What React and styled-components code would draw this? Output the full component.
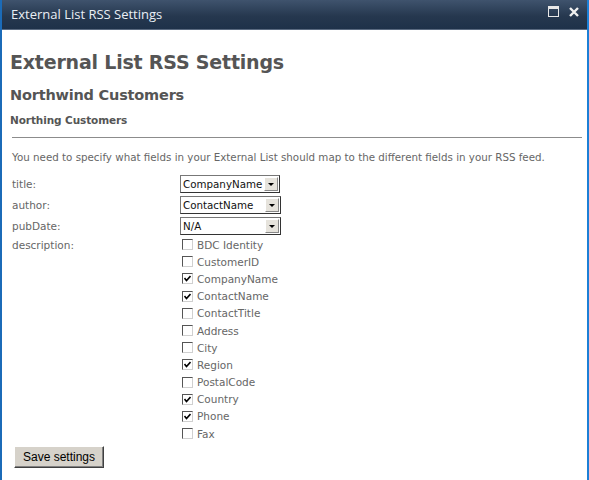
import React from "react";
import styled, { createGlobalStyle } from "styled-components";

const Global = createGlobalStyle`
  html, body { margin: 0; padding: 0; background: #fff; }
  body { font-family: Verdana, "DejaVu Sans", sans-serif; }
`;

const Frame = styled.div`
  width: 589px;
  height: 480px;
  box-sizing: border-box;
  border-left: 2px solid #1b6bb8;
  border-right: 2px solid #1c80d6;
  display: flex;
  flex-direction: column;
  overflow: hidden;
`;

const TitleBar = styled.div`
  height: 30px;
  flex: none;
  display: flex;
  align-items: center;
  justify-content: space-between;
  padding: 0 8px 0 9px;
  background: linear-gradient(#3f536d, #26384f 55%, #1e3149);
  border-bottom: 1px solid #5a6a80;
  box-sizing: border-box;
`;

const TitleText = styled.span`
  font-family: "Open Sans", "Noto Sans", sans-serif;
  font-size: 13px;
  color: #e9eef4;
  margin-top: -1px;
`;

const Controls = styled.div`
  display: flex;
  gap: 10px;
  align-items: center;
  margin-top: -6px;
`;

const Body = styled.div`
  flex: 1;
  padding: 20px 8px 0 8px;
  color: #5c5c5c;
`;

const H1 = styled.h1`
  margin: 0;
  font-size: 19px;
  font-weight: bold;
  color: #555;
  line-height: 24px;
  letter-spacing: -0.2px;
`;

const H2 = styled.h2`
  margin: 11px 0 0;
  font-size: 14.5px;
  font-weight: bold;
  color: #555;
  line-height: 20px;
  letter-spacing: -0.2px;
`;

const H3 = styled.h3`
  margin: 8px 0 0;
  font-size: 10.5px;
  font-weight: bold;
  color: #555;
  line-height: 14px;
  letter-spacing: -0.1px;
`;

const Rule = styled.div`
  margin: 10px 0 0 2px;
  height: 1px;
  border-top: 1px solid #8c8c8c;
  width: 570px;
`;

const Intro = styled.p`
  margin: 11px 0 0 2px;
  font-size: 10.3px;
  color: #666;
  line-height: 14px;
`;

const Form = styled.div`
  margin-top: 11px;
  display: grid;
  grid-template-columns: 170px 1fr;
  row-gap: 3px;
`;

const Label = styled.div`
  font-size: 10.5px;
  color: #666;
  padding: ${(p) => (p.top ? 1 : 3)}px 0 0 2px;
  line-height: 12px;
`;

const Select = styled.div`
  width: ${(p) => p.w}px;
  height: 18px;
  box-sizing: border-box;
  border: 1px solid #333;
  border-top-color: #777;
  border-left-color: #777;
  display: flex;
  align-items: center;
  justify-content: space-between;
  background: #fff;
  padding-left: 2px;
`;

const SelectText = styled.span`
  font-size: 10.3px;
  color: #111;
  white-space: nowrap;
`;

const Arrow = styled.span`
  flex: none;
  width: 14px;
  height: 14px;
  margin-right: 1px;
  background: #e6e3dc;
  border: 1px solid #fff;
  border-right-color: #888;
  border-bottom-color: #888;
  box-sizing: border-box;
  display: flex;
  align-items: center;
  justify-content: center;
  &::after {
    content: "";
    border-left: 3px solid transparent;
    border-right: 3px solid transparent;
    border-top: 3px solid #000;
  }
`;

const Checks = styled.div`
  display: flex;
  flex-direction: column;
  gap: 4px;
  padding: 0 0 0 2px;
`;

const CheckRow = styled.div`
  display: flex;
  align-items: center;
  gap: 4px;
  height: 13.2px;
  font-size: 10.5px;
  color: #666;
`;

const Box = styled.span`
  width: 11px;
  height: 11px;
  box-sizing: border-box;
  border: 1px solid #d0d0d0;
  border-top-color: #555;
  border-left-color: #555;
  background: #fff;
  display: flex;
  align-items: center;
  justify-content: center;
`;

const Button = styled.button`
  margin: 6px 0 0 4px;
  width: 90px;
  height: 22px;
  background: #d6d2ca;
  border: 1px solid;
  border-color: #fff #404040 #404040 #fff;
  box-shadow: inset -1px -1px 0 #808080;
  font-family: "Liberation Sans", Arial, sans-serif;
  font-size: 12px;
  color: #000;
  padding: 0;
`;

const fields = [
  ["BDC Identity", false],
  ["CustomerID", false],
  ["CompanyName", true],
  ["ContactName", true],
  ["ContactTitle", false],
  ["Address", false],
  ["City", false],
  ["Region", true],
  ["PostalCode", false],
  ["Country", true],
  ["Phone", true],
  ["Fax", false],
];

function Drop({ value, w }) {
  return (
    <Select w={w}>
      <SelectText>{value}</SelectText>
      <Arrow />
    </Select>
  );
}

export default function App() {
  return (
    <>
      <Global />
      <Frame>
        <TitleBar>
          <TitleText>External List RSS Settings</TitleText>
          <Controls>
            <svg width="11" height="11" viewBox="0 0 11 11">
              <rect x="0.5" y="0.5" width="10" height="10" fill="none" stroke="#e8e8e8" />
              <rect x="1" y="1" width="9" height="2" fill="#e8e8e8" />
            </svg>
            <svg width="10" height="10" viewBox="0 0 10 10">
              <path d="M1 1 L9 9 M9 1 L1 9" stroke="#f0f0f0" strokeWidth="2.4" />
            </svg>
          </Controls>
        </TitleBar>
        <Body>
          <H1>External List RSS Settings</H1>
          <H2>Northwind Customers</H2>
          <H3>Northing Customers</H3>
          <Rule />
          <Intro>
            You need to specify what fields in your External List should map to the different fields in your RSS feed.
          </Intro>
          <Form>
            <Label>title:</Label>
            <Drop value="CompanyName" w={100} />
            <Label>author:</Label>
            <Drop value="ContactName" w={101} />
            <Label>pubDate:</Label>
            <Drop value="N/A" w={101} />
            <Label top>description:</Label>
            <Checks>
              {fields.map(([name, on]) => (
                <CheckRow key={name}>
                  <Box>
                    {on && (
                      <svg width="7" height="7" viewBox="0 0 7 7">
                        <path d="M0.5 3 L2.5 5.5 L6.5 1" fill="none" stroke="#000" strokeWidth="1.6" />
                      </svg>
                    )}
                  </Box>
                  {name}
                </CheckRow>
              ))}
            </Checks>
          </Form>
          <Button>Save settings</Button>
        </Body>
      </Frame>
    </>
  );
}
